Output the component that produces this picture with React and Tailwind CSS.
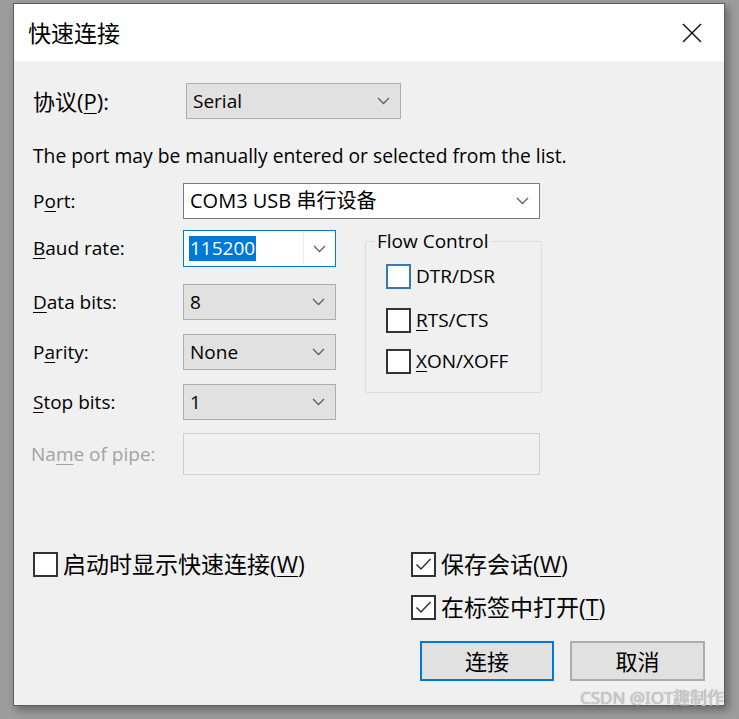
import React from "react";

const Chevron = () => (
  <svg width="13" height="8" viewBox="0 0 13 8" className="shrink-0">
    <polyline points="1,1 6.5,6.5 12,1" fill="none" stroke="#5f5f5f" strokeWidth="1.3" />
  </svg>
);

const U = ({ children }) => <span className="underline underline-offset-[3px] decoration-[1px]">{children}</span>;

function Box({ checked, blue }) {
  return (
    <div
      className={
        "w-[25px] h-[25px] shrink-0 bg-white border-2 flex items-center justify-center " +
        (blue ? "border-[#3a78b0]" : "border-[#333333]")
      }
    >
      {checked && (
        <svg width="21" height="21" viewBox="0 0 21 21">
          <polyline points="3.5,10.5 8,15 17.5,5" fill="none" stroke="#333" strokeWidth="1.5" />
        </svg>
      )}
    </div>
  );
}

function GraySelect({ value, w = "w-[153px]", h = "h-[36px]" }) {
  return (
    <div className={w + " " + h + " bg-[#e1e1e1] border border-[#adadad] flex items-center justify-between pl-[6px] pr-[10px]"}>
      <span className="text-[19px] leading-none">{value}</span>
      <Chevron />
    </div>
  );
}

export default function App() {
  return (
    <div className="w-[739px] h-[719px] bg-[#9c9c9c] overflow-hidden relative font-['Open_Sans','Noto_Sans_CJK_SC',sans-serif] text-black">
      <div className="ml-[13px] mt-[3px] w-[712px] h-[703px] border border-[#5c5c5c] bg-[#f0f0f0] shadow-[3px_4px_8px_rgba(0,0,0,0.35)] flex flex-col">
        {/* title bar */}
        <div className="h-[57px] bg-white flex items-center justify-between pl-[14px] pr-[22px] shrink-0">
          <span className="text-[23px] leading-none font-['Noto_Sans_CJK_SC',sans-serif]">快速连接</span>
          <svg width="20" height="20" viewBox="0 0 20 20">
            <line x1="1" y1="1" x2="19" y2="19" stroke="#111" strokeWidth="1.5" />
            <line x1="19" y1="1" x2="1" y2="19" stroke="#111" strokeWidth="1.5" />
          </svg>
        </div>

        {/* body */}
        <div className="flex-1 pl-[19px] pt-[22px] flex flex-col">
          {/* protocol */}
          <div className="flex items-center h-[36px]">
            <span className="w-[153px] text-[22px] leading-none">
              协议(<U>P</U>):
            </span>
            <GraySelect value="Serial" w="w-[215px]" />
          </div>

          <div className="mt-[25px] leading-[24px] text-[19.3px]">
            The port may be manually entered or selected from the list.
          </div>

          {/* port */}
          <div className="mt-[15px] flex items-center h-[36px]">
            <span className="w-[150px] text-[19px]">
              P<U>o</U>rt:
            </span>
            <div className="w-[357px] h-[36px] bg-white border border-[#7a7a7a] flex items-center justify-between pl-[6px] pr-[10px]">
              <span className="text-[20px] leading-none">COM3 USB 串行设备</span>
              <Chevron />
            </div>
          </div>

          {/* serial params + flow control */}
          <div className="mt-[11px] flex">
            <div className="flex flex-col">
              <div className="flex items-center h-[37px]">
                <span className="w-[150px] text-[19px]">
                  <U>B</U>aud rate:
                </span>
                <div className="w-[153px] h-[37px] bg-white border border-[#0078d7] flex items-center">
                  <div className="flex-1 pl-[5px] flex items-center">
                    <span className="bg-[#0078d7] text-white text-[19px] leading-[25px] px-[1px]">115200</span>
                  </div>
                  <div className="w-[1px] h-[33px] bg-[#ececec]" />
                  <div className="w-[31px] flex items-center justify-center">
                    <Chevron />
                  </div>
                </div>
              </div>
              <div className="mt-[17px] flex items-center h-[36px]">
                <span className="w-[150px] text-[19px]">
                  <U>D</U>ata bits:
                </span>
                <GraySelect value="8" />
              </div>
              <div className="mt-[14px] flex items-center h-[36px]">
                <span className="w-[150px] text-[19px]">
                  P<U>a</U>rity:
                </span>
                <GraySelect value="None" />
              </div>
              <div className="mt-[14px] flex items-center h-[36px]">
                <span className="w-[150px] text-[19px]">
                  <U>S</U>top bits:
                </span>
                <GraySelect value="1" />
              </div>
            </div>

            <fieldset className="ml-[29px] w-[177px] h-[163px] border border-[#dcdcdc] rounded-[2px] pl-[9px] pt-[12px]">
              <legend className="px-[2px] text-[19px] leading-[22px]">Flow Control</legend>
              <div className="ml-[11px] flex flex-col">
                <div className="flex items-center h-[25px] gap-[5px]">
                  <Box blue />
                  <span className="text-[19px]">DTR/DSR</span>
                </div>
                <div className="mt-[19px] flex items-center h-[25px] gap-[5px]">
                  <Box />
                  <span className="text-[19px]">
                    <U>R</U>TS/CTS
                  </span>
                </div>
                <div className="mt-[16px] flex items-center h-[25px] gap-[5px]">
                  <Box />
                  <span className="text-[19px]">
                    <U>X</U>ON/XOFF
                  </span>
                </div>
              </div>
            </fieldset>
          </div>

          {/* pipe */}
          <div className="mt-[13px] flex items-center h-[42px]">
            <span className="w-[150px] -ml-[2px] text-[19px] text-[#a3a3a3]">
              Na<U>m</U>e of pipe:
            </span>
            <div className="ml-[2px] w-[357px] h-[42px] bg-[#f0f0f0] border border-[#cfcfcf]" />
          </div>

          {/* bottom */}
          <div className="mt-[77px] flex">
            <div className="w-[378px] flex items-start">
              <div className="flex items-center h-[25px] gap-[5px]">
                <Box />
                <span className="text-[23px] leading-none">
                  启动时显示快速连接(<U>W</U>)
                </span>
              </div>
            </div>
            <div className="flex flex-col">
              <div className="flex items-center h-[25px] gap-[5px]">
                <Box checked />
                <span className="text-[23px] leading-none">
                  保存会话(<U>W</U>)
                </span>
              </div>
              <div className="mt-[18px] flex items-center h-[25px] gap-[5px]">
                <Box checked />
                <span className="text-[23px] leading-none">
                  在标签中打开(<U>T</U>)
                </span>
              </div>
              <div className="mt-[21px] ml-[9px] flex gap-[16px]">
                <div className="w-[134px] h-[40px] bg-[#e1e1e1] border-2 border-[#0078d7] flex items-center justify-center text-[22px]">
                  连接
                </div>
                <div className="w-[135px] h-[40px] bg-[#e1e1e1] border-2 border-[#adadad] flex items-center justify-center text-[22px]">
                  取消
                </div>
              </div>
            </div>
          </div>
        </div>
      </div>

      {/* watermark */}
      <div className="absolute left-[580px] top-[687px] text-[17px] leading-[22px] text-[#cdcdcd] [text-shadow:0_0_1px_#8a8a8a] font-['Noto_Sans','Noto_Sans_CJK_SC',sans-serif]">
        CSDN @IOT趣制作
      </div>
    </div>
  );
}
